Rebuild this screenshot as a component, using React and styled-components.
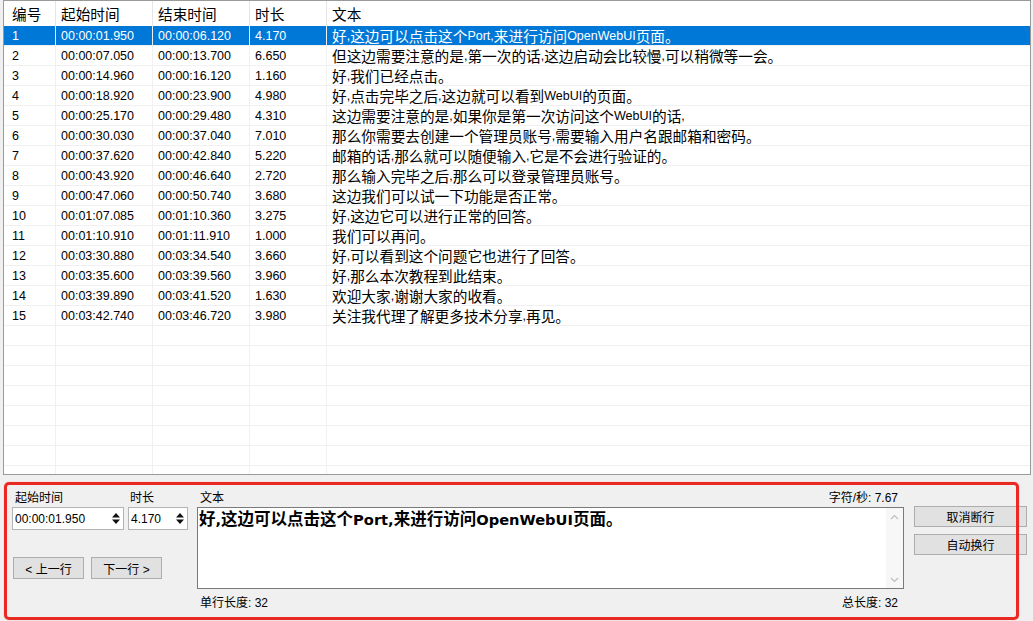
import styled, { createGlobalStyle } from 'styled-components';

const rows = [
  ['1', '00:00:01.950', '00:00:06.120', '4.170', '好,这边可以点击这个Port,来进行访问OpenWebUI页面。'],
  ['2', '00:00:07.050', '00:00:13.700', '6.650', '但这边需要注意的是,第一次的话,这边启动会比较慢,可以稍微等一会。'],
  ['3', '00:00:14.960', '00:00:16.120', '1.160', '好,我们已经点击。'],
  ['4', '00:00:18.920', '00:00:23.900', '4.980', '好,点击完毕之后,这边就可以看到WebUI的页面。'],
  ['5', '00:00:25.170', '00:00:29.480', '4.310', '这边需要注意的是,如果你是第一次访问这个WebUI的话,'],
  ['6', '00:00:30.030', '00:00:37.040', '7.010', '那么你需要去创建一个管理员账号,需要输入用户名跟邮箱和密码。'],
  ['7', '00:00:37.620', '00:00:42.840', '5.220', '邮箱的话,那么就可以随便输入,它是不会进行验证的。'],
  ['8', '00:00:43.920', '00:00:46.640', '2.720', '那么输入完毕之后,那么可以登录管理员账号。'],
  ['9', '00:00:47.060', '00:00:50.740', '3.680', '这边我们可以试一下功能是否正常。'],
  ['10', '00:01:07.085', '00:01:10.360', '3.275', '好,这边它可以进行正常的回答。'],
  ['11', '00:01:10.910', '00:01:11.910', '1.000', '我们可以再问。'],
  ['12', '00:03:30.880', '00:03:34.540', '3.660', '好,可以看到这个问题它也进行了回答。'],
  ['13', '00:03:35.600', '00:03:39.560', '3.960', '好,那么本次教程到此结束。'],
  ['14', '00:03:39.890', '00:03:41.520', '1.630', '欢迎大家,谢谢大家的收看。'],
  ['15', '00:03:42.740', '00:03:46.720', '3.980', '关注我代理了解更多技术分享,再见。'],
];

const headers = ['编号', '起始时间', '结束时间', '时长', '文本'];

const GlobalStyle = createGlobalStyle`
  html, body {
    margin: 0;
    background: #f0f0f0;
    overflow: hidden;
  }
  * { box-sizing: border-box; }
`;

const Window = styled.div`
  width: 1033px;
  height: 621px;
  display: flex;
  flex-direction: column;
  padding: 0 2px 0 3px;
  font-family: "Liberation Sans", "Noto Sans CJK SC", sans-serif;
  font-size: 12px;
  color: #000;
`;

const ListView = styled.div`
  flex: none;
  height: 475px;
  border: 1px solid #9a9a9a;
  background: #fff;
  overflow: hidden;
`;

const Grid = styled.div`
  display: grid;
  grid-template-columns: 52px 97px 97px 77px 1fr;
  height: ${({ $head }) => ($head ? '25px' : '20px')};
  border-bottom: ${({ $head }) => ($head ? 'none' : '1px solid #f0f0f0')};
  background: ${({ $selected }) => ($selected ? '#0078d7' : 'transparent')};
  color: ${({ $selected }) => ($selected ? '#fff' : '#000')};
`;

const HeadCell = styled.div`
  display: flex;
  align-items: center;
  padding-left: ${({ $first }) => ($first ? '8px' : '5px')};
  border-right: 1px solid #e5e5e5;
  font-family: "Noto Sans CJK SC", sans-serif;
  font-size: 14.67px;
  &:last-child { border-right: none; }
`;

const Cell = styled.div`
  display: flex;
  align-items: center;
  white-space: nowrap;
  overflow: hidden;
  padding-left: ${({ $first }) => ($first ? '8px' : '5px')};
  border-right: 1px solid #f0f0f0;
  font-family: ${({ $cjk }) => ($cjk ? '"Noto Sans CJK SC", sans-serif' : '"Liberation Sans", sans-serif')};
  font-size: ${({ $cjk }) => ($cjk ? '14.67px' : '12.5px')};
  &:last-child { border-right: none; }
`;

const Latin = styled.span`
  font-family: ${({ $bold }) => ($bold ? '"DejaVu Sans", sans-serif' : '"Liberation Sans", sans-serif')};
  font-size: ${({ $bold }) => ($bold ? '14.67px' : '12.5px')};
  font-weight: ${({ $bold }) => ($bold ? 700 : 400)};
`;

function Mixed({ text, bold }) {
  return text
    .split(/([\x20-\x7e]+)/)
    .map((s, i) => (i % 2 ? <Latin key={i} $bold={bold}>{s}</Latin> : s));
}

const BottomPanel = styled.div`
  position: relative;
  flex: 1;
  display: flex;
  padding: 16px 0 0 9px;
`;

const LeftBlock = styled.div`
  width: 176px;
  display: flex;
  flex-direction: column;
`;

const FieldRow = styled.div`
  display: flex;
  gap: 4px;
`;

const Field = styled.div`
  display: flex;
  flex-direction: column;
  width: ${({ $w }) => $w}px;
`;

const Label = styled.div`
  height: 14px;
  line-height: 14px;
  margin-bottom: 2px;
  padding-left: ${({ $pad }) => $pad ?? 3}px;
  white-space: nowrap;
`;

const SpinBox = styled.div`
  height: 23px;
  display: flex;
  align-items: center;
  justify-content: space-between;
  padding: 0 3px 0 2px;
  background: #fff;
  border: 1px solid #b4b4b4;
`;

const NavRow = styled.div`
  display: flex;
  gap: 7px;
  margin-top: 27px;
  padding-left: 1px;
`;

const Button = styled.button`
  width: ${({ $w }) => $w}px;
  height: ${({ $h }) => $h || 21}px;
  padding: 0;
  background: #e1e1e1;
  border: 1px solid #adadad;
  font-family: "Liberation Sans", "Noto Sans CJK SC", sans-serif;
  font-size: 12px;
  color: #000;
  white-space: nowrap;
`;

const MiddleBlock = styled.div`
  width: 707px;
  margin-left: 9px;
  display: flex;
  flex-direction: column;
`;

const SplitRow = styled.div`
  display: flex;
  justify-content: space-between;
  height: 14px;
  line-height: 14px;
  padding: 0 6px 0 3px;
  margin: ${({ $top }) => ($top ? '0 0 2px' : '7px 0 0')};
`;

const TextBox = styled.div`
  height: 82px;
  display: flex;
  background: #fff;
  border: 1px solid #7a7a7a;
`;

const TextContent = styled.div`
  flex: 1;
  padding: 1px 0 0 1px;
  font-family: "Noto Sans CJK SC", sans-serif;
  font-size: 16.5px;
  font-weight: 700;
  line-height: 19px;
  white-space: nowrap;
`;

const ScrollBar = styled.div`
  width: 17px;
  display: flex;
  flex-direction: column;
  justify-content: space-between;
  align-items: center;
  padding: 6px 0 5px;
  background: #f7f7f7;
`;

const RightBlock = styled.div`
  margin-left: 10px;
  padding-top: 15px;
  display: flex;
  flex-direction: column;
  gap: 7px;
`;

const Highlight = styled.div`
  position: absolute;
  left: 1px;
  top: 7px;
  width: 1015px;
  height: 138px;
  border: 3px solid #ea2a22;
  border-radius: 5px;
  box-shadow: 0 0 1px #f77;
  pointer-events: none;
`;

function SpinArrows() {
  return (
    <svg width="8" height="11" viewBox="0 0 8 11">
      <path d="M4 0 L8 4.5 H0 Z M0 6.5 H8 L4 11 Z" fill="#111" />
    </svg>
  );
}

function Chevron({ down }) {
  return (
    <svg width="9" height="6" viewBox="0 0 9 6">
      <polyline
        points={down ? '1,1 4.5,4.5 8,1' : '1,5 4.5,1.5 8,5'}
        fill="none"
        stroke="#bdbdbd"
        strokeWidth="1.2"
      />
    </svg>
  );
}

export default function App() {
  const filler = Array.from({ length: 8 });
  return (
    <>
      <GlobalStyle />
      <Window>
        <ListView>
          <Grid $head>
            {headers.map((h, i) => (
              <HeadCell key={h} $first={i === 0}>{h}</HeadCell>
            ))}
          </Grid>
          {rows.map((r, idx) => (
            <Grid key={r[0]} $selected={idx === 0}>
              <Cell $first>{r[0]}</Cell>
              <Cell>{r[1]}</Cell>
              <Cell>{r[2]}</Cell>
              <Cell>{r[3]}</Cell>
              <Cell $cjk><Mixed text={r[4]} /></Cell>
            </Grid>
          ))}
          {filler.map((_, i) => (
            <Grid key={`f${i}`}>
              <Cell $first />
              <Cell />
              <Cell />
              <Cell />
              <Cell />
            </Grid>
          ))}
        </ListView>

        <BottomPanel>
          <LeftBlock>
            <FieldRow>
              <Field $w={112}>
                <Label>起始时间</Label>
                <SpinBox>
                  <span>00:00:01.950</span>
                  <SpinArrows />
                </SpinBox>
              </Field>
              <Field $w={60}>
                <Label $pad={2}>时长</Label>
                <SpinBox>
                  <span>4.170</span>
                  <SpinArrows />
                </SpinBox>
              </Field>
            </FieldRow>
            <NavRow>
              <Button $w={71} $h={22}>&lt; 上一行</Button>
              <Button $w={71} $h={22}>下一行 &gt;</Button>
            </NavRow>
          </LeftBlock>

          <MiddleBlock>
            <SplitRow $top>
              <span>文本</span>
              <span>字符/秒: 7.67</span>
            </SplitRow>
            <TextBox>
              <TextContent>
                <Mixed text="好,这边可以点击这个Port,来进行访问OpenWebUI页面。" bold />
              </TextContent>
              <ScrollBar>
                <Chevron />
                <Chevron down />
              </ScrollBar>
            </TextBox>
            <SplitRow>
              <span>单行长度: 32</span>
              <span>总长度: 32</span>
            </SplitRow>
          </MiddleBlock>

          <RightBlock>
            <Button $w={113}>取消断行</Button>
            <Button $w={113}>自动换行</Button>
          </RightBlock>

          <Highlight />
        </BottomPanel>
      </Window>
    </>
  );
}
